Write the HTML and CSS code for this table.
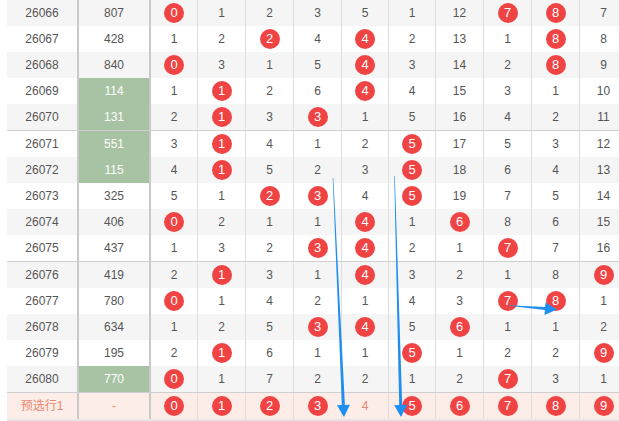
FILE: index.html
```html
<!DOCTYPE html>
<html lang="zh">
<head>
<meta charset="utf-8">
<title>走势图</title>
<link rel="stylesheet" href="styles.css">
</head>
<body>
<div class="wrap">
  <div class="table" id="table"></div>
</div>
<svg class="arrows" width="619" height="421" viewBox="0 0 619 421">
  <polygon points="333.3,178 344.9,404.9 349.9,404.7 344,417 336.9,405.3 341.9,405.1 332.7,178"/>
  <polygon points="394.8,176 402.2,405 407.2,404.8 401,417 394.2,405.2 399.2,405 394.2,176"/>
  <polygon points="509,305.8 544.9,310 544.5,315 557,309.5 545.5,302.5 545.1,307 509,305.2"/>
</svg>
<script src="app.js"></script>
</body>
</html>
```
FILE: app.js
```js
var rows = [
  ["26066","807",0,"0*","1","2","3","5","1","12","7*","8*","7"],
  ["26067","428",0,"1","2","2*","4","4*","2","13","1","8*","8"],
  ["26068","840",0,"0*","3","1","5","4*","3","14","2","8*","9"],
  ["26069","114",1,"1","1*","2","6","4*","4","15","3","1","10"],
  ["26070","131",1,"2","1*","3","3*","1","5","16","4","2","11"],
  ["26071","551",1,"3","1*","4","1","2","5*","17","5","3","12"],
  ["26072","115",1,"4","1*","5","2","3","5*","18","6","4","13"],
  ["26073","325",0,"5","1","2*","3*","4","5*","19","7","5","14"],
  ["26074","406",0,"0*","2","1","1","4*","1","6*","8","6","15"],
  ["26075","437",0,"1","3","2","3*","4*","2","1","7*","7","16"],
  ["26076","419",0,"2","1*","3","1","4*","3","2","1","8","9*"],
  ["26077","780",0,"0*","1","4","2","1","4","3","7*","8*","1"],
  ["26078","634",0,"1","2","5","3*","4*","5","6*","1","1","2"],
  ["26079","195",0,"2","1*","6","1","1","5*","1","2","2","9*"],
  ["26080","770",1,"0*","1","7","2","2","1","2","7*","3","1"],
  ["预选行1","-",0,"0*","1*","2*","3*","4","5*","6*","7*","8*","9*"]
];
var table = document.getElementById("table");
rows.forEach(function (r, i) {
  var row = document.createElement("div");
  var cls = "row";
  if (i === 15) cls += " pre";
  else cls += (i % 2 === 0) ? " odd" : " even";
  if (i === 4 || i === 9 || i === 14) cls += " group-end";
  row.className = cls;
  var c1 = document.createElement("div");
  c1.className = "cell issue";
  c1.textContent = r[0];
  row.appendChild(c1);
  var c2 = document.createElement("div");
  c2.className = "cell num" + (r[2] ? " hit" : "");
  c2.textContent = r[1];
  row.appendChild(c2);
  for (var k = 3; k < 13; k++) {
    var c = document.createElement("div");
    c.className = "cell val";
    var v = r[k];
    if (v.indexOf("*") >= 0) {
      var b = document.createElement("span");
      b.className = "ball";
      b.textContent = v.replace("*", "");
      c.appendChild(b);
    } else {
      c.textContent = v;
    }
    row.appendChild(c);
  }
  table.appendChild(row);
});
```
FILE: styles.css
```css
html, body {
  margin: 0;
  padding: 0;
  overflow: hidden;
  background: #fff;
}
body {
  position: relative;
  width: 619px;
  height: 421px;
  font-family: "Liberation Sans", Arial, "Noto Sans CJK SC", sans-serif;
  font-size: 12px;
  color: #555;
}
.wrap {
  padding-left: 7px;
  overflow: hidden;
}
.table {
  width: 621px;
  border-bottom: 2px solid #e6e6e6;
}
.row {
  display: grid;
  grid-template-columns: 72px 72px 47px 48px 48px 48px 47px 47px 48px 48px 48px 48px;
  height: 26px;
}
.row.odd { background: #f5f5f5; }
.row.even { background: #fff; }
.row.pre { background: #fdede8; }
.row.group-end {
  border-bottom: 1px solid #cfcfcf;
}
.cell {
  display: flex;
  align-items: center;
  justify-content: center;
  border-right: 1px solid #dedede;
  line-height: 26px;
}
.issue, .num {
  border-right: 2px solid #c9c9c9;
}
.num.hit {
  background: #a8c3a3;
  color: #fff;
}
.pre .issue, .pre .num, .pre .val {
  color: #e8876f;
}
.ball {
  display: flex;
  align-items: center;
  justify-content: center;
  width: 20px;
  height: 20px;
  border-radius: 50%;
  background: #f04343;
  color: #fff;
  font-size: 13px;
  line-height: 20px;
}
.pre .ball { color: #fff; }
.arrows {
  position: absolute;
  left: 0;
  top: 0;
  pointer-events: none;
}
.arrows polygon {
  fill: #1f8ef1;
}
```
